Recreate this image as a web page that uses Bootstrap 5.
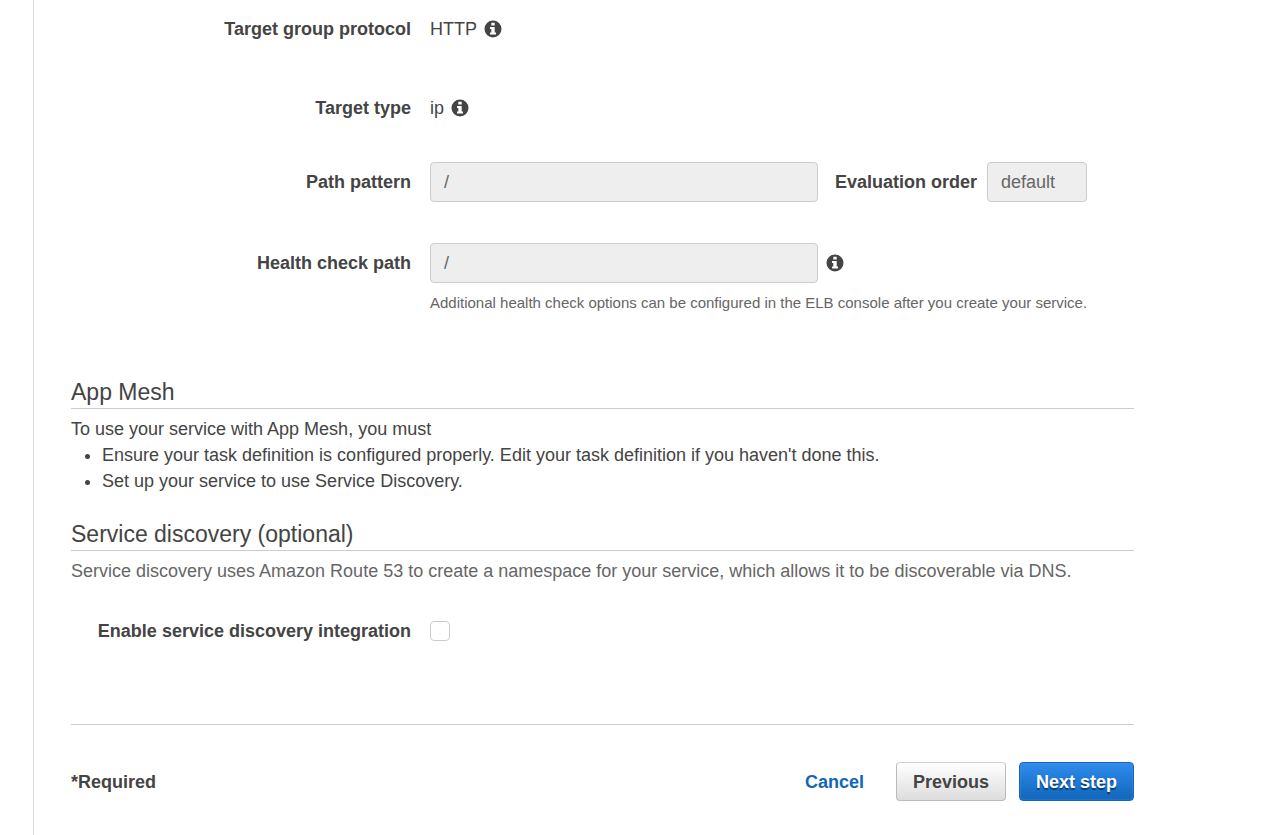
<!DOCTYPE html>
<html lang="en">
<head>
<meta charset="utf-8">
<meta name="viewport" content="width=device-width, initial-scale=1">
<title>Configure network</title>
<link href="https://cdn.jsdelivr.net/npm/bootstrap@5.3.0/dist/css/bootstrap.min.css" rel="stylesheet">
<style>
body{font-family:"Liberation Sans",Arial,sans-serif;font-size:18px;line-height:26px;color:#444;background:#fff}
.wizard{margin-left:33px;border-left:1px solid #ddd;padding:16px 138px 34px 37px;min-height:100vh}
.field-list{display:grid;row-gap:41px}
.field-row{display:grid;grid-template-columns:340px minmax(0,1fr);column-gap:19px}
.text-row{min-height:38px}
.field-name{text-align:right}
.with-info{gap:7px}
.wizard .form-control{height:40px;font-size:18px;line-height:26px;padding:6px 13px;border:1px solid #ccc;border-radius:4px;background:#eee;color:#666}
.path-box{max-width:388px}
.wizard .order-box{width:100px}
.order-name{margin:0 10px 0 17px}
.info{width:18px;height:18px;flex:none;fill:#444}
.hint{font-size:15px;line-height:20px;color:#666;margin-top:10px}
.section-title{font-size:23px;line-height:32px;font-weight:400;border-bottom:1px solid #ccc;margin:0 0 7px}
.mesh-section{margin-top:63px}
.mesh-list{padding-left:31px;margin:0}
.muted-text{color:#666}
.toggle-row{margin-top:34px}
.wizard .form-check-input{width:20px;height:20px;border:1px solid #ccc;border-radius:4px;margin:0}
.footer-bar{border-top:1px solid #ccc;margin-top:80px;padding-top:37px}
.wizard .btn{font-size:18px;line-height:26px;font-weight:700;height:39px;padding:5px 16px;border-radius:4px}
.cancel-link{color:#1166bb;text-decoration:none;margin-right:32px}
.wizard .btn-prev{color:#444;border:1px solid #bbb;border-top-color:#d5d5d5;background:linear-gradient(#fff,#ddd);margin-right:13px}
.wizard .btn-next{color:#fff;border:1px solid #1b63b5;background:linear-gradient(#2e8cec,#1166bb);box-shadow:inset 0 0 2px #4a9bed;text-shadow:0 2px 1px #0b3c70}
</style>
</head>
<body>
<svg class="d-none"><symbol id="info" viewBox="0 0 18 18"><path fill-rule="evenodd" d="M9 .5a8.500 8.500 0 1 1 0 17A8.500 8.500 0 0 1 9 .5ZM7.300 2.800v2.700h3.400V2.800ZM6 7v1.900h1.300v3.700H6v1.900h6v-1.900h-1.300V7Z"/></symbol></svg>
<main class="wizard">
<form>
<div class="field-list">
  <div class="field-row text-row align-items-start">
    <div class="field-name fw-bold">Target group protocol</div>
    <div class="with-info d-flex align-items-center">HTTP<svg class="info" role="img" aria-label="Info"><use href="#info"/></svg></div>
  </div>
  <div class="field-row align-items-center">
    <div class="field-name fw-bold">Target type</div>
    <div class="with-info d-flex align-items-center">ip<svg class="info" role="img" aria-label="Info"><use href="#info"/></svg></div>
  </div>
  <div class="field-row align-items-center">
    <label class="field-name fw-bold" for="path">Path pattern</label>
    <div class="d-flex align-items-center">
      <input class="form-control path-box" id="path" value="/" disabled>
      <label class="order-name fw-bold text-nowrap" for="order">Evaluation order</label>
      <input class="form-control order-box" id="order" value="default" disabled>
    </div>
  </div>
  <div class="field-row align-items-center">
    <label class="field-name fw-bold" for="health">Health check path</label>
    <div class="d-flex align-items-center gap-2">
      <input class="form-control path-box" id="health" value="/" disabled>
      <svg class="info" role="img" aria-label="Info"><use href="#info"/></svg>
    </div>
  </div>
</div>
<div class="field-row"><span></span><div class="hint">Additional health check options can be configured in the ELB console after you create your service.</div></div>

<section class="mesh-section">
  <h2 class="section-title">App Mesh</h2>
  <p class="mb-0">To use your service with App Mesh, you must</p>
  <ul class="mesh-list">
    <li>Ensure your task definition is configured properly. Edit your task definition if you haven't done this.</li>
    <li>Set up your service to use Service Discovery.</li>
  </ul>
</section>

<section class="mt-4">
  <h2 class="section-title">Service discovery (optional)</h2>
  <p class="muted-text mb-0">Service discovery uses Amazon Route 53 to create a namespace for your service, which allows it to be discoverable via DNS.</p>
  <div class="field-row toggle-row align-items-center">
    <label class="field-name fw-bold" for="discovery">Enable service discovery integration</label>
    <input class="form-check-input" type="checkbox" id="discovery">
  </div>
</section>

<footer class="footer-bar d-flex align-items-center">
  <span class="fw-bold me-auto">*Required</span>
  <a class="cancel-link fw-bold" href="#">Cancel</a>
  <button type="button" class="btn btn-prev">Previous</button>
  <button type="submit" class="btn btn-next">Next step</button>
</footer>
</form>
</main>
<script src="https://cdn.jsdelivr.net/npm/bootstrap@5.3.0/dist/js/bootstrap.bundle.min.js"></script>
</body>
</html>
